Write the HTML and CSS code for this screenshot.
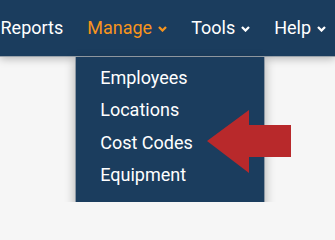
FILE: index.html
```html
<!DOCTYPE html>
<html>
<head>
<meta charset="utf-8">
<link rel="stylesheet" href="styles.css">
</head>
<body>
<nav class="navbar">
  <ul class="menu">
    <li class="item">Reports</li>
    <li class="item active">Manage
      <svg class="chev" viewBox="0 0 9 6" width="9" height="6"><path d="M1 1 L4.5 4.5 L8 1" fill="none" stroke="currentColor" stroke-width="2.3"/></svg>
      <ul class="dropdown">
        <li>Employees</li>
        <li>Locations</li>
        <li>Cost Codes</li>
        <li>Equipment</li>
      </ul>
    </li>
    <li class="item">Tools
      <svg class="chev" viewBox="0 0 9 6" width="9" height="6"><path d="M1 1 L4.5 4.5 L8 1" fill="none" stroke="currentColor" stroke-width="2.3"/></svg>
    </li>
    <li class="item">Help
      <svg class="chev" viewBox="0 0 9 6" width="9" height="6"><path d="M1 1 L4.5 4.5 L8 1" fill="none" stroke="currentColor" stroke-width="2.3"/></svg>
    </li>
  </ul>
</nav>
<main class="page"></main>
<svg class="arrow" width="335" height="202" viewBox="0 0 335 202"><polygon points="207,141 249,110 249,125 291,125 291,157 249,157 249,173" fill="#b8292b"/></svg>
</body>
</html>
```
FILE: styles.css
```css
html, body {
  margin: 0;
  padding: 0;
  width: 335px;
  height: 202px;
  overflow: hidden;
  background: #f6f6f6;
  font-family: Roboto, "Liberation Sans", sans-serif;
}
body {
  position: relative;
}
.navbar {
  position: relative;
  z-index: 2;
  height: 56px;
  background: #1b3d5e;
  border-bottom: 1px solid #9aa3ab;
  box-shadow: 0 2px 8px rgba(0,0,0,0.25);
}
.menu {
  list-style: none;
  margin: 0 0 0 -11.5px;
  padding: 0;
  display: flex;
  white-space: nowrap;
}
.item {
  position: relative;
  display: flex;
  align-items: center;
  gap: 6px;
  padding: 0 12px;
  height: 56px;
  line-height: 56px;
  font-size: 18px;
  font-weight: 400;
  color: #ffffff;
}
.item.active {
  color: #f7941d;
}
.chev {
  display: block;
  margin-top: 2px;
}
.dropdown {
  position: absolute;
  top: 57px;
  left: 0;
  width: 190px;
  height: 150px;
  margin: 0;
  padding: 5px 0 0;
  box-sizing: border-box;
  list-style: none;
  background: #1b3d5e;
  border: 1px solid #8d98a3;
  border-top: none;
  box-shadow: 0 3px 10px rgba(0,0,0,0.3);
}
.dropdown li {
  padding-left: 24px;
  line-height: 32.4px;
  font-size: 18px;
  font-weight: 400;
  color: #ffffff;
}
.page {
  height: 145px;
}
.arrow {
  position: absolute;
  top: 0;
  left: 0;
  z-index: 3;
}
```
